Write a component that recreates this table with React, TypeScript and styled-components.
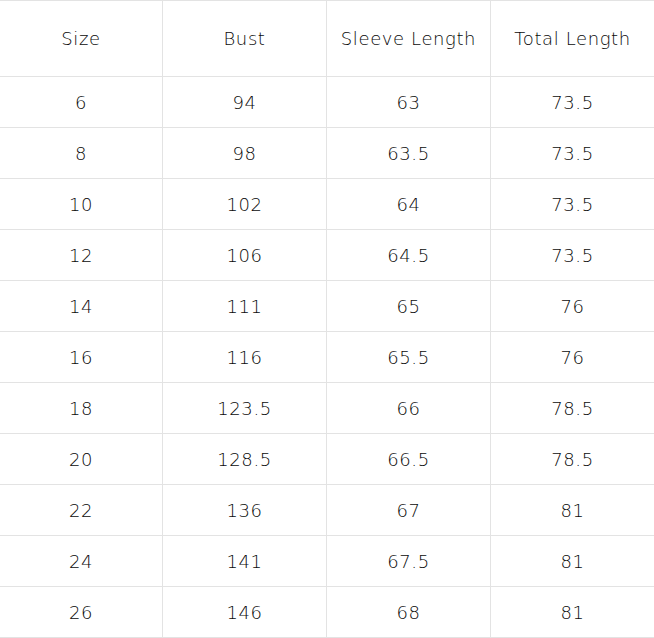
import React from "react";
import styled, { createGlobalStyle } from "styled-components";

const GlobalStyle = createGlobalStyle`
  body {
    margin: 0;
    background-color: #ffffff;
  }
`;

const Table = styled.div`
  display: grid;
  grid-template-columns: 163px 164px 164px 163px;
  width: 654px;
  border-top: 1px solid #e3e3e3;
  font-family: "DejaVu Sans", sans-serif;
  font-weight: 200;
  color: #0a0a0a;
`;

const Cell = styled.div<{ $head?: boolean; $last?: boolean }>`
  display: flex;
  align-items: center;
  justify-content: center;
  height: ${(p) => (p.$head ? "75px" : "50px")};
  font-size: 18px;
  letter-spacing: 0.6px;
  border-bottom: 1px solid #e3e3e3;
  border-right: ${(p) => (p.$last ? "none" : "1px solid #e3e3e3")};
`;

const headers = ["Size", "Bust", "Sleeve Length", "Total Length"];

const rows = [
  ["6", "94", "63", "73.5"],
  ["8", "98", "63.5", "73.5"],
  ["10", "102", "64", "73.5"],
  ["12", "106", "64.5", "73.5"],
  ["14", "111", "65", "76"],
  ["16", "116", "65.5", "76"],
  ["18", "123.5", "66", "78.5"],
  ["20", "128.5", "66.5", "78.5"],
  ["22", "136", "67", "81"],
  ["24", "141", "67.5", "81"],
  ["26", "146", "68", "81"],
];

const App: React.FC = () => {
  return (
    <>
      <GlobalStyle />
      <Table>
        {headers.map((h, i) => (
          <Cell key={h} $head $last={i === headers.length - 1}>
            {h}
          </Cell>
        ))}
        {rows.map((row, r) =>
          row.map((value, i) => (
            <Cell key={`${r}-${i}`} $last={i === row.length - 1}>
              {value}
            </Cell>
          ))
        )}
      </Table>
    </>
  );
};

export default App;
